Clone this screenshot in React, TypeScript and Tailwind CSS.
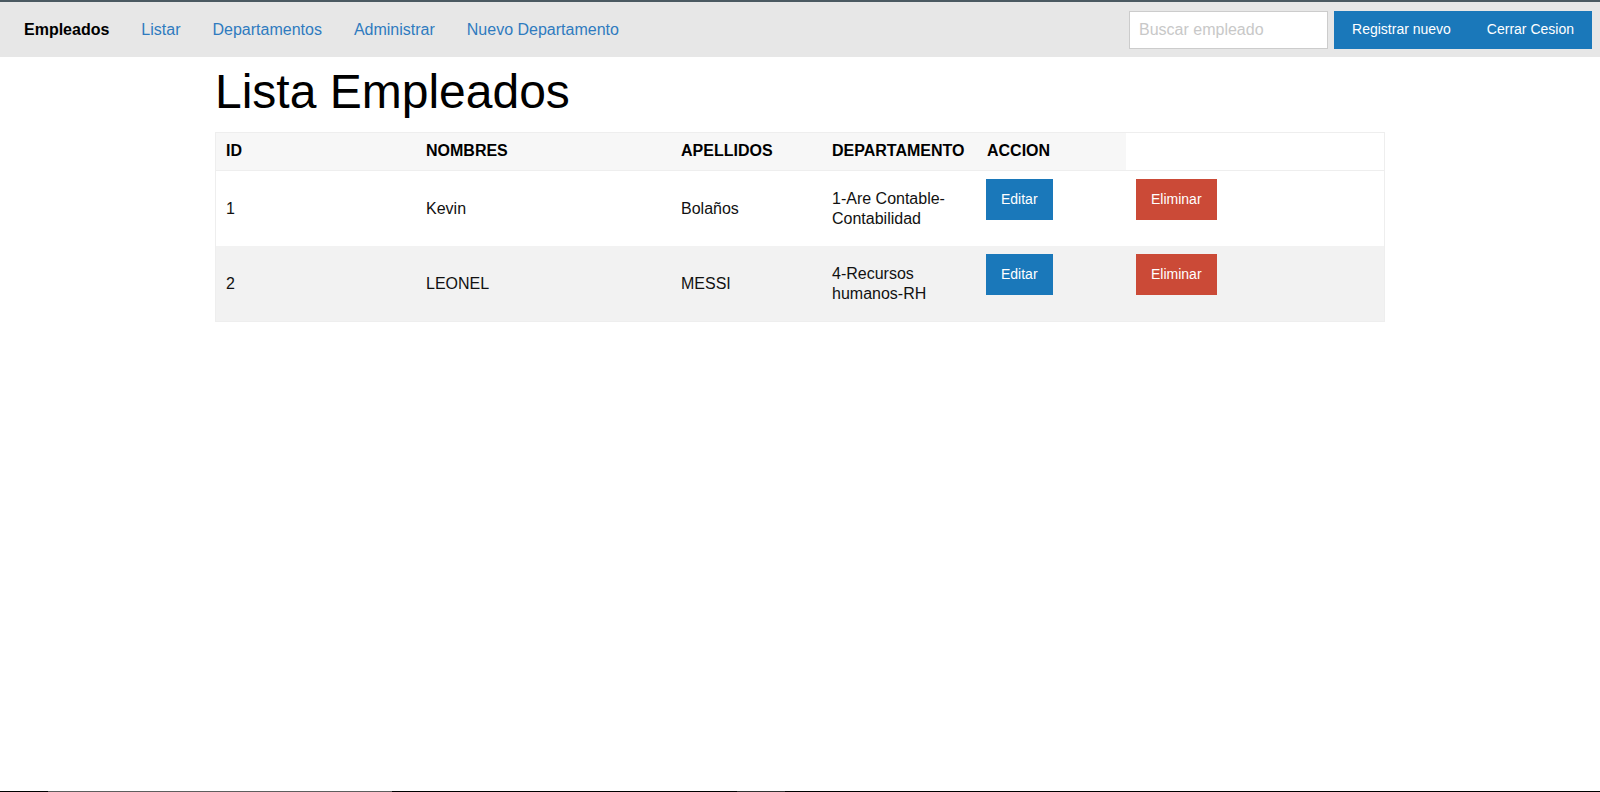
import React from 'react';

interface Empleado {
  id: number;
  nombres: string;
  apellidos: string;
  departamento: React.ReactNode;
}

const EMPLEADOS: Empleado[] = [
  {
    id: 1,
    nombres: 'Kevin',
    apellidos: 'Bolaños',
    departamento: (
      <>
        1-Are Contable-
        <br />
        Contabilidad
      </>
    ),
  },
  { id: 2, nombres: 'LEONEL', apellidos: 'MESSI', departamento: '4-Recursos humanos-RH' },
];

const NAV_LINKS = ['Listar', 'Departamentos', 'Administrar', 'Nuevo Departamento'];

const COLS = 'grid grid-cols-[200px_255px_151px_155px_149px_1fr]';

export default function App() {
  return (
    <div className="min-h-[792px] flex flex-col bg-white text-[#111] font-['Liberation_Sans',Arial,sans-serif]">
      {/* Navbar */}
      <nav className="h-[57px] border-t-2 border-[#4b5a62] bg-[#e7e7e7] flex items-center justify-between pl-2 pr-2">
        <div className="flex items-center text-[16px]">
          <a className="px-4 font-bold text-black">Empleados</a>
          {NAV_LINKS.map(link => (
            <a key={link} className="px-4 text-[#2f7bbf]">
              {link}
            </a>
          ))}
        </div>
        <div className="flex items-center">
          <input
            type="text"
            placeholder="Buscar empleado"
            className="w-[199px] h-[38px] border border-[#cccccc] bg-white pl-[9px] text-[16px] outline-none placeholder:text-[#c8c8c8]"
          />
          <div className="ml-[6px] flex h-[38px] bg-[#1a78ba] text-white text-[14px]">
            <button className="px-[18px]">Registrar nuevo</button>
            <button className="px-[18px]">Cerrar Cesion</button>
          </div>
        </div>
      </nav>

      <main className="w-[1170px] mx-auto">
        <h1 className="mt-[11px] text-[48px] leading-[48px] text-black">Lista Empleados</h1>

        {/* Tabla */}
        <div className="mt-[16px] border border-[#eeeeee] text-[16px]">
          <div className={`${COLS} h-[38px] border-b border-[#eeeeee] font-bold text-black`}>
            {['ID', 'NOMBRES', 'APELLIDOS', 'DEPARTAMENTO', 'ACCION'].map(h => (
              <div key={h} className="px-[10px] pb-[2px] flex items-center whitespace-nowrap bg-[#f7f7f7]">
                {h}
              </div>
            ))}
            <div />
          </div>
          {EMPLEADOS.map((e, i) => (
            <div key={e.id} className={`${COLS} h-[75px] ${i % 2 === 1 ? 'bg-[#f2f2f2]' : 'bg-white'}`}>
              <div className="px-[10px] flex items-center">{e.id}</div>
              <div className="px-[10px] flex items-center">{e.nombres}</div>
              <div className="px-[10px] flex items-center">{e.apellidos}</div>
              <div className="px-[10px] flex items-center leading-5">
                <span>{e.departamento}</span>
              </div>
              <div className="pl-[9px] pr-[10px] pt-2">
                <button className="h-[41px] px-[15px] bg-[#1a78ba] text-white text-[14px]">Editar</button>
              </div>
              <div className="px-[10px] pt-2">
                <button className="h-[41px] px-[15px] bg-[#cb4a37] text-white text-[14px]">Eliminar</button>
              </div>
            </div>
          ))}
        </div>
      </main>

      {/* borde inferior */}
      <div className="mt-auto h-px flex">
        <div className="w-[48px] bg-black" />
        <div className="w-[344px] bg-[#5e5e5e]" />
        <div className="w-[345px] bg-black" />
        <div className="w-[48px] bg-[#333333]" />
        <div className="flex-1 bg-black" />
      </div>
    </div>
  );
}
